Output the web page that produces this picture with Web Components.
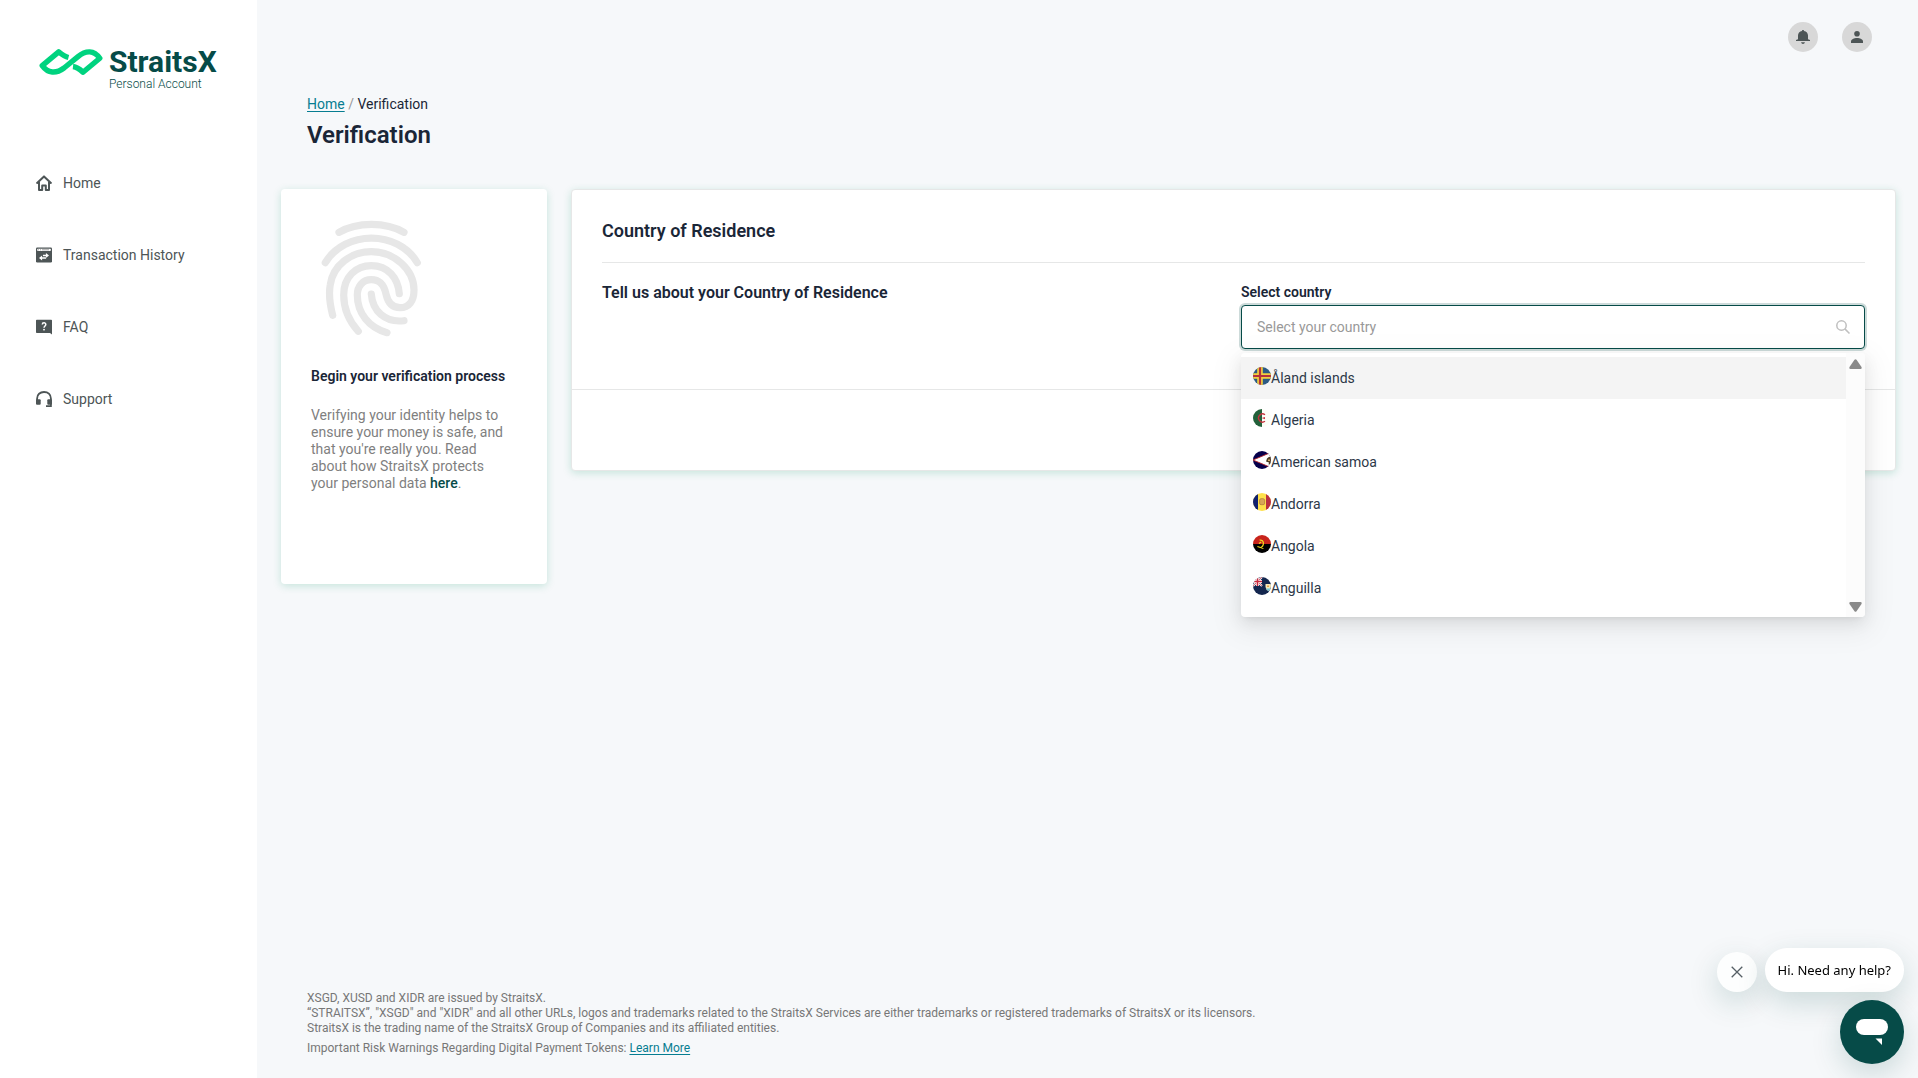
<!DOCTYPE html>
<html lang="en">
<head>
<meta charset="utf-8">
<title>Verification - StraitsX</title>
<style>
  html, body {
    margin: 0;
  }

  body {
    background: #f6f8fa;
    color: #1a2637;
    font: 14px/18px Roboto, "Liberation Sans", sans-serif;
    --ink: #1a2637;
    --muted: #7f7f7f;
    --icon: #4d5556;
    --brand: #064b48;
    --link: #067d91;
    --line: #e6e7e7;
  }
</style>
</head>
<body>
<app-shell>
  <side-nav slot="nav">
    <nav-item icon="home">Home</nav-item>
    <nav-item icon="history">Transaction History</nav-item>
    <nav-item icon="faq">FAQ</nav-item>
    <nav-item icon="support">Support</nav-item>
  </side-nav>
  <top-bar slot="top"></top-bar>
  <page-heading slot="heading" parent="Home">Verification</page-heading>
  <intro-card></intro-card>
  <residence-card heading="Country of Residence">
    <span slot="question">Tell us about your Country of Residence</span>
    <country-select label="Select country" placeholder="Select your country"></country-select>
  </residence-card>
  <legal-footer slot="footer"></legal-footer>
</app-shell>
<chat-widget message="Hi. Need any help?"></chat-widget>

<script>
const NAV_ICONS = {
  home: '<path d="M1.1 7.9 8 1.4l6.900 6.500M3 7V15h3.200v-4.500h3.600V15H13V7" fill="none" stroke="currentColor" stroke-width="2" stroke-linejoin="round" stroke-linecap="round"/>',
  history: '<rect y=".5" width="16" height="15" rx="1.2" fill="currentColor"/><rect x="1.2" y="1.7" width="13.6" height="2.2" rx=".6" fill="#fff"/><path d="M2 2.8h1M4 2.8h1M6 2.8h7" stroke="#777" stroke-width=".7"/><path d="M13 8.5 9.900 6v1.700H7v1.600h2.900V11zM3 11l3.100-2.500v1.700h4v1.600h-4v1.700z" fill="#fff"/>',
  faq: '<path d="M.8.8h14.400q.8 0 .8.8V15.500L14 14H.8Q0 14 0 13.200V1.600Q0 .8.8.8z" fill="currentColor"/><path d="M6.300 5.500C6.300 3.300 9.800 3.300 9.800 5.400 9.800 6.900 8 7 8 8.800" fill="none" stroke="#fff" stroke-width="1.5"/><rect x="7.2" y="9.9" width="1.6" height="1.5" fill="#fff"/>',
  support: '<path d="M1.100 10V7.500C1.100 3.500 4 1 8 1s6.900 2.500 6.900 6.500V15.200H10" fill="none" stroke="currentColor" stroke-width="1.800"/><rect x="0" y="8.3" width="4.7" height="5.400" rx="1" fill="currentColor"/><rect x="11.3" y="8.3" width="4.7" height="5.400" rx="1" fill="currentColor"/>'
};

const FLAGS = {
  ax: '<path fill="#2c5a83" d="M0 0h18v18H0z"/><path stroke="#f2cf3f" stroke-width="5.6" d="M7 0v18M0 9h18"/><path stroke="#b5303c" stroke-width="2.2" d="M7 0v18M0 9h18"/>',
  dz: '<path fill="#fdfef8" d="M0 0h18v18H0z"/><path fill="#22603a" d="M0 0h9v18H0z"/><path d="M12 5.800A4 4 0 1 0 12 12.200" fill="none" stroke="#c8343f" stroke-width="1.4"/><path d="m8.700 9 3.300-1.100V10.200z" fill="#c8343f"/>',
  as: '<path fill="#06004b" d="M0 0h18v18H0z"/><path fill="#fff" stroke="#b5262d" stroke-width=".9" d="M0 9 19 1v16z"/><path d="M14 7.500q2-2.500 4-1.500v7l-2.500.5.500-2-3-1z" fill="#4c3a22"/><path d="M15 8.500h2v1.500h-2z" fill="#d6ad67"/>',
  ad: '<path fill="#fee04b" d="M0 0h18v18H0z"/><path fill="#10206f" d="M0 0h5v18H0z"/><path fill="#ba2f42" d="M13 0h5v18h-5z"/><rect x="6.6" y="5.7" width="5" height="6" rx="1.5" fill="#d9a657" stroke="#b37d40" stroke-width=".8"/>',
  ao: '<path fill="#c8241c" d="M0 0h18v9H0z"/><path d="M0 9h18v9H0z"/><path d="M6.600 5.200c5-1 4.800 6 .8 7.600m-3-1.300 6 2M6 8.600l2.200-1.700" fill="none" stroke="#f1d51c" stroke-width="1.3"/>',
  ai: '<path fill="#13264e" d="M0 0h18v18H0z"/><path d="m0 0 9 9M9 0 0 9" stroke="#fff" stroke-width="2"/><path d="m0 0 9 9M9 0 0 9" stroke="#c92b3f" stroke-width=".7"/><path d="M4.500 0v9M0 4.500h9" stroke="#fff" stroke-width="3"/><path d="M4.500 0v9M0 4.500h9" stroke="#c92b3f" stroke-width="1.6"/><path fill="#f4e9bb" d="M12.500 7H18v4q-1 2.500-2.700 3Q13 13 12.500 10z"/><path fill="#63c7df" d="M13 11.500h5L15.300 14z"/><path fill="#e7a148" d="M14 8.500h2V10h-2z"/>'
};

const COUNTRIES = [
  ['ax', 'Åland islands'],
  ['dz', 'Algeria'],
  ['as', 'American samoa'],
  ['ad', 'Andorra'],
  ['ao', 'Angola'],
  ['ai', 'Anguilla']
];

class BaseElement extends HTMLElement {
  constructor() {
    super();
    this.attachShadow({ mode: 'open' });
  }

  connectedCallback() {
    this.render();
  }
}

class AppShell extends BaseElement {
  render() {
    this.shadowRoot.innerHTML = `
      <style>
        :host {
          display: grid;
          grid-template-columns: 257px minmax(0, 1fr);
          min-height: 100vh;
        }

        .main {
          display: flex;
          flex-direction: column;
        }

        main {
          flex: 1;
        }

        .cards {
          display: grid;
          grid-template-columns: 266px minmax(0, 1fr);
          align-items: start;
          gap: 24px;
          padding: 0 22px 0 24px;
        }
      </style>
      <slot name="nav"></slot>
      <div class="main">
        <slot name="top"></slot>
        <main>
          <slot name="heading"></slot>
          <div class="cards"><slot></slot></div>
        </main>
        <slot name="footer"></slot>
      </div>
    `;
  }
}

class SideNav extends BaseElement {
  render() {
    this.shadowRoot.innerHTML = `
      <style>
        :host {
          display: block;
          background: #fff;
        }

        .logo {
          display: grid;
          grid-template-columns: 64px auto;
          justify-content: start;
          column-gap: 6px;
          padding: 46px 0 0 39px;
          color: var(--brand);
          text-decoration: none;
        }

        .logo svg {
          margin-top: 3px;
        }

        .name {
          font: 700 30px/32px Roboto, sans-serif;
        }

        .sub {
          grid-column: 2;
          font: 300 12px/12px Roboto, sans-serif;
        }

        nav {
          display: flex;
          flex-direction: column;
          gap: 54px;
          padding: 84px 0 0 36px;
        }
      </style>
      <a class="logo" href="#">
        <svg width="64" height="26" viewBox="0 0 64 26" fill="none" stroke="#00d37f" stroke-width="5.4" stroke-linejoin="round" aria-hidden="true">
          <path d="M29.500 8.500Q25.500 7.500 19.700 2.900L3.200 16.600C9 24.500 17 25 25 19L39 7.600C47 1 55 1 60.800 9.200L44 23.200Q38.500 18 34 17.500"/>
        </svg>
        <span class="name">StraitsX</span>
        <span class="sub">Personal Account</span>
      </a>
      <nav aria-label="Main"><slot></slot></nav>
    `;
  }
}

class NavItem extends BaseElement {
  render() {
    this.shadowRoot.innerHTML = `
      <style>
        :host {
          display: block;
        }

        a {
          display: flex;
          align-items: center;
          gap: 11px;
          color: var(--icon);
          text-decoration: none;
        }
      </style>
      <a href="#">
        <svg width="16" height="16" viewBox="0 0 16 16" aria-hidden="true">${NAV_ICONS[this.getAttribute('icon')]}</svg>
        <slot></slot>
      </a>
    `;
  }
}

class TopBar extends BaseElement {
  render() {
    this.shadowRoot.innerHTML = `
      <style>
        :host {
          display: flex;
          justify-content: flex-end;
          gap: 24px;
          padding: 22px 46px 0 0;
        }

        button {
          display: grid;
          place-items: center;
          width: 30px;
          height: 30px;
          padding: 0;
          border: 0;
          border-radius: 50%;
          background: #d8d8d8;
          color: var(--icon);
        }
      </style>
      <button type="button" aria-label="Notifications">
        <svg width="14" height="14" viewBox="0 0 14 14" fill="currentColor"><path d="M7 0c.8 0 1 .5 1 .9 2.500.4 4 2.200 4 4.600V9.300l2 .7v1H0v-1l2-.7V5.500C2 3.100 3.500 1.300 6 .9 6 .5 6.200 0 7 0zM5 12.200h4Q8.500 14 7 14T5 12.200z"/></svg>
      </button>
      <button type="button" aria-label="Profile">
        <svg width="12" height="12" viewBox="0 0 12 12" fill="currentColor"><circle cx="6" cy="2.8" r="2.8"/><path d="M0 12V10.500C0 5.700 12 5.700 12 10.500V12z"/></svg>
      </button>
    `;
  }
}

class PageHeading extends BaseElement {
  render() {
    this.shadowRoot.innerHTML = `
      <style>
        :host {
          display: block;
          padding: 43px 50px 39px;
        }

        a {
          color: var(--link);
          text-underline-offset: 2px;
        }

        .sep {
          color: #999;
        }

        h1 {
          margin: 7px 0 0;
          font-size: 24px;
          font-weight: 600;
          line-height: 30px;
        }
      </style>
      <nav aria-label="Breadcrumb">
        <a href="#">${this.getAttribute('parent')}</a> <span class="sep">/</span> <span>${this.textContent}</span>
      </nav>
      <h1><slot></slot></h1>
    `;
  }
}

class IntroCard extends BaseElement {
  render() {
    this.shadowRoot.innerHTML = `
      <style>
        :host {
          display: block;
          box-sizing: border-box;
          min-height: 395px;
          padding: 30px;
          border-radius: 4px;
          background: #fff;
          box-shadow: 0 2px 8px rgba(0, 150, 100, 0.2);
        }

        svg {
          display: block;
        }

        h2 {
          margin: 28px 0 22px;
          font-size: 14px;
          font-weight: 600;
          line-height: 18px;
        }

        p {
          margin: 0;
          padding-right: 8px;
          color: var(--muted);
          line-height: 17px;
        }

        a {
          color: var(--brand);
          font-weight: 500;
          text-decoration: none;
        }
      </style>
      <svg width="120" height="120" viewBox="0 0 120 120" fill="none" stroke="#e7e7e7" stroke-width="7.2" stroke-linecap="round" aria-hidden="true">
        <path d="M28 13.300C46 2.600 75 2.600 93 13.300"/>
        <path d="M14.300 43.700C34 10.800 87 10.800 106.300 43.700"/>
        <path d="M21.700 96.300C19 86 17.500 76 19.200 66 22 46 40 32.700 60.300 32.700 84 32.700 103 51 103 71 103 82 98 88.700 89 88.700 80 88.700 76.500 82 75 75 73 66 69 60.700 60.300 60.700 52 60.700 46.300 67 46.300 76 46.300 94 58 109 76 113.700"/>
        <path d="M47.300 112.300C38 102 32.700 90 32.700 76 32.700 58 45 46.700 60.300 46.700 77 46.700 87 59 88.300 74.700"/>
        <path d="M60.300 75C61.500 92 74 104 93 101.700"/>
      </svg>
      <h2>Begin your verification process</h2>
      <p>Verifying your identity helps to ensure your money is safe, and that you're really you. Read about how StraitsX protects your personal data <a href="#">here</a>.</p>
    `;
  }
}

class ResidenceCard extends BaseElement {
  render() {
    this.shadowRoot.innerHTML = `
      <style>
        :host {
          display: block;
          border: 1px solid var(--line);
          border-radius: 4px;
          background: #fff;
          box-shadow: 0 2px 8px rgba(0, 150, 100, 0.2);
        }

        .body {
          padding: 30px 30px 40px;
        }

        h2 {
          margin: 0;
          padding-bottom: 20px;
          border-bottom: 1px solid var(--line);
          font-size: 18px;
          font-weight: 600;
          line-height: 22px;
        }

        .row {
          display: grid;
          grid-template-columns: 1fr 1fr;
          column-gap: 15px;
          padding-top: 20px;
        }

        h3 {
          margin: 0;
          font-size: 16px;
          font-weight: 600;
          line-height: 20px;
        }

        footer {
          height: 80px;
          border-top: 1px solid var(--line);
        }
      </style>
      <div class="body">
        <h2>${this.getAttribute('heading')}</h2>
        <div class="row">
          <h3><slot name="question"></slot></h3>
          <slot></slot>
        </div>
      </div>
      <footer></footer>
    `;
  }
}

class CountrySelect extends BaseElement {
  render() {
    this.shadowRoot.innerHTML = `
      <style>
        :host {
          display: block;
          position: relative;
        }

        label {
          display: block;
          margin-bottom: 4px;
          font-weight: 600;
        }

        .field {
          display: flex;
          align-items: center;
          height: 42px;
          padding: 0 14px 0 15px;
          border: 1px solid var(--brand);
          border-radius: 4px;
          background: #fff;
          box-shadow: 0 0 0 2px rgba(6, 75, 72, 0.2);
        }

        input {
          flex: 1;
          min-width: 0;
          padding: 0;
          border: 0;
          outline: 0;
          background: none;
          color: inherit;
          font: inherit;
        }

        input::placeholder {
          color: #999;
          opacity: 1;
        }

        /* the list hangs over the card and the page below it */
        .menu {
          position: absolute;
          top: 100%;
          left: 0;
          right: 0;
          display: flex;
          margin-top: 4px;
          border-radius: 4px;
          background: #fff;
          box-shadow: 0 3px 6px -4px rgba(0, 0, 0, 0.12), 0 6px 16px rgba(0, 0, 0, 0.08), 0 9px 28px 8px rgba(0, 0, 0, 0.05);
          overflow: hidden;
        }

        ul {
          flex: 1;
          margin: 0;
          padding: 4px 0 8px;
          list-style: none;
        }

        li {
          display: flex;
          align-items: center;
          height: 42px;
          padding: 0 12px;
          color: #2d3848;
        }

        li.active {
          background: #f4f4f4;
        }

        li svg {
          margin-bottom: 4px;
          border-radius: 50%;
        }

        .scroll {
          display: flex;
          flex-direction: column;
          justify-content: space-between;
          align-items: center;
          width: 19px;
          padding: 6px 0 5px;
          box-sizing: border-box;
          background: #fcfcfc;
        }
      </style>
      <label for="country">${this.getAttribute('label')}</label>
      <div class="field">
        <input id="country" type="text" role="combobox" aria-expanded="true" aria-controls="list" placeholder="${this.getAttribute('placeholder')}">
        <svg width="14" height="14" viewBox="0 0 14 14" fill="none" stroke="#bfbfbf" stroke-width="1.5" aria-hidden="true"><circle cx="5.5" cy="5.5" r="4.7"/><path d="m8.900 8.900 4.600 4.600"/></svg>
      </div>
      <div class="menu">
        <ul id="list" role="listbox">
          ${COUNTRIES.map(([code, name], i) => `
            <li role="option" class="${i === 0 ? 'active' : ''}">
              <svg width="18" height="18" viewBox="0 0 18 18" aria-hidden="true">${FLAGS[code]}</svg><span>${name}</span>
            </li>
          `).join('')}
        </ul>
        <div class="scroll" aria-hidden="true">
          <svg width="13" height="10" viewBox="0 0 13 10" fill="#8a8a8a"><path d="M5.500.8q1-1.300 2 0l5 7.200q.7 2-1 2h-10q-1.700 0-1-2z"/></svg>
          <svg width="13" height="10" viewBox="0 0 13 10" fill="#8a8a8a"><path d="M5.500 9.200q1 1.300 2 0l5-7.200q.7-2-1-2h-10q-1.700 0-1 2z"/></svg>
        </div>
      </div>
    `;
  }
}

class LegalFooter extends BaseElement {
  render() {
    this.shadowRoot.innerHTML = `
      <style>
        :host {
          display: block;
          padding: 0 50px 22px;
          color: #777;
          font-size: 12px;
          line-height: 15px;
        }

        p {
          margin: 0;
        }

        p + p {
          margin-top: 5px;
        }

        a {
          color: var(--link);
          text-underline-offset: 2px;
        }
      </style>
      <footer>
        <p>XSGD, XUSD and XIDR are issued by StraitsX.<br>
        “STRAITSX”, "XSGD" and "XIDR" and all other URLs, logos and trademarks related to the StraitsX Services are either trademarks or registered trademarks of StraitsX or its licensors.<br>
        StraitsX is the trading name of the StraitsX Group of Companies and its affiliated entities.</p>
        <p>Important Risk Warnings Regarding Digital Payment Tokens: <a href="#">Learn More</a></p>
      </footer>
    `;
  }
}

class ChatWidget extends BaseElement {
  render() {
    this.shadowRoot.innerHTML = `
      <style>
        :host {
          position: fixed;
          right: 14px;
          bottom: 14px;
          display: flex;
          flex-direction: column;
          align-items: flex-end;
          gap: 8px;
        }

        .prompt {
          display: flex;
          align-items: flex-end;
          gap: 8px;
        }

        button {
          display: grid;
          place-items: center;
          padding: 0;
          border: 0;
          border-radius: 50%;
          box-shadow: 0 10px 30px rgba(6, 75, 72, 0.18);
        }

        .close {
          width: 40px;
          height: 40px;
          background: #fdfefe;
        }

        .bubble {
          height: 44px;
          padding: 0 13px;
          border-radius: 22px;
          background: #fff;
          color: #000;
          font: 13px/20px "Noto Sans", "Open Sans", sans-serif;
        }

        .launcher {
          width: 64px;
          height: 64px;
          background: var(--brand);
        }
      </style>
      <div class="prompt">
        <button class="close" type="button" aria-label="Close message">
          <svg width="12" height="12" viewBox="0 0 12 12" stroke="#555f65" stroke-width="1.3"><path d="m.7.7 10.600 10.600M11.300.7.7 11.300"/></svg>
        </button>
        <button class="bubble" type="button">${this.getAttribute('message')}</button>
      </div>
      <button class="launcher" type="button" aria-label="Open chat">
        <svg width="32" height="28" viewBox="0 0 32 28" fill="#fff"><rect y="1" width="32" height="16" rx="8"/><path d="M19.500 20.500H26V27z"/></svg>
      </button>
    `;
  }
}

customElements.define('app-shell', AppShell);
customElements.define('side-nav', SideNav);
customElements.define('nav-item', NavItem);
customElements.define('top-bar', TopBar);
customElements.define('page-heading', PageHeading);
customElements.define('intro-card', IntroCard);
customElements.define('residence-card', ResidenceCard);
customElements.define('country-select', CountrySelect);
customElements.define('legal-footer', LegalFooter);
customElements.define('chat-widget', ChatWidget);
</script>
</body>
</html>
